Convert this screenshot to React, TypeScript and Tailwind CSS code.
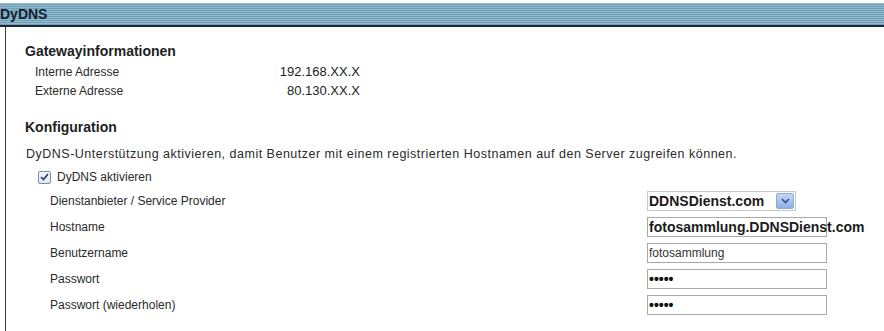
import React from 'react';

const rows = [
  { label: 'Dienstanbieter / Service Provider', kind: 'select', value: 'DDNSDienst.com' },
  { label: 'Hostname', kind: 'big', value: 'fotosammlung.DDNSDienst.com' },
  { label: 'Benutzername', kind: 'text', value: 'fotosammlung' },
  { label: 'Passwort', kind: 'pass', value: '•••••' },
  { label: 'Passwort (wiederholen)', kind: 'pass', value: '•••••' },
];

const Field = ({ kind, value }: { kind: string; value: string }) => {
  if (kind === 'select') {
    return (
      <div className="flex items-center w-[149px] h-[20px] border border-[#c8c8c8] bg-white">
        <span className="flex-1 pl-[1px] text-[14px] font-bold leading-none text-[#1a1a1a]">{value}</span>
        <span className="mr-[1px] flex items-center justify-center w-[18px] h-[16px] rounded-[2px] border border-[#8eacd8] bg-gradient-to-b from-[#c4d6f3] to-[#8fb0e2]">
          <svg width="9" height="6" viewBox="0 0 9 6">
            <polyline points="1,1 4.5,4.5 8,1" fill="none" stroke="#2a4f9a" strokeWidth="1.6" />
          </svg>
        </span>
      </div>
    );
  }
  return (
    <div className="relative w-[180px] h-[20px] border border-[#a9a9a9] bg-white">
      <span
        className={
          kind === 'big'
            ? 'absolute left-[1px] top-[1px] whitespace-nowrap text-[14px] font-bold leading-[16px] text-[#1a1a1a]'
            : kind === 'pass'
            ? 'absolute left-[1px] top-[1px] text-[14px] font-bold leading-[16px] text-[#111]'
            : 'absolute left-[1px] top-[2px] text-[12px] leading-[14px] text-[#333]'
        }
      >
        {value}
      </span>
    </div>
  );
};

export default function App() {
  return (
    <div className="w-[884px] h-[331px] overflow-hidden bg-white font-['Liberation_Sans',Arial,sans-serif]">
      {/* title bar */}
      <div className="mt-[3px] h-[24px] flex items-center border-b-2 border-[#1b2a3b] bg-[repeating-linear-gradient(to_bottom,#93bccf_0px,#93bccf_1px,#6f9db4_1px,#6f9db4_2px)]">
        <span className="text-[14px] font-bold text-[#132030] leading-none">DyDNS</span>
      </div>

      <div className="ml-[5px] h-full border-l border-[#3a3a3a] pl-[19px] pt-[16px] text-[#2a2a2a]">
        <h3 className="text-[14px] font-bold leading-[16px] text-[#1e1e1e]">Gatewayinformationen</h3>
        <div className="mt-[3px] pl-[10px]">
          <div className="flex h-[19px] items-center">
            <span className="w-[160px] text-[12px]">Interne Adresse</span>
            <span className="w-[165px] text-right text-[13px] text-[#222]">192.168.XX.X</span>
          </div>
          <div className="flex h-[19px] items-center">
            <span className="w-[160px] text-[12px]">Externe Adresse</span>
            <span className="w-[165px] text-right text-[13px] text-[#222]">80.130.XX.X</span>
          </div>
        </div>

        <h3 className="mt-[19px] text-[14px] font-bold leading-[16px] text-[#1e1e1e]">Konfiguration</h3>
        <p className="mt-[11px] pl-[1px] text-[12.5px] leading-[16px] tracking-[0.5px]">
          DyDNS-Unterstützung aktivieren, damit Benutzer mit einem registrierten Hostnamen auf den Server zugreifen können.
        </p>
        <label className="mt-[6px] ml-[13px] flex h-[18px] items-center gap-[6px] text-[12px]">
          <span className="flex h-[13px] w-[13px] items-center justify-center rounded-[2px] border border-[#7a8ea6] bg-gradient-to-b from-[#f4f7fb] to-[#dfe6ee]">
            <svg width="9" height="8" viewBox="0 0 9 8">
              <polyline points="1,4 3.5,6.5 8,1" fill="none" stroke="#1f3f74" strokeWidth="1.7" />
            </svg>
          </span>
          DyDNS aktivieren
        </label>

        <div className="mt-[2px] pl-[25px]">
          {rows.map((r) => (
            <div key={r.label} className="flex h-[26px] items-center">
              <span className="w-[597px] text-[12px]">{r.label}</span>
              <Field kind={r.kind} value={r.value} />
            </div>
          ))}
        </div>
      </div>
    </div>
  );
}
